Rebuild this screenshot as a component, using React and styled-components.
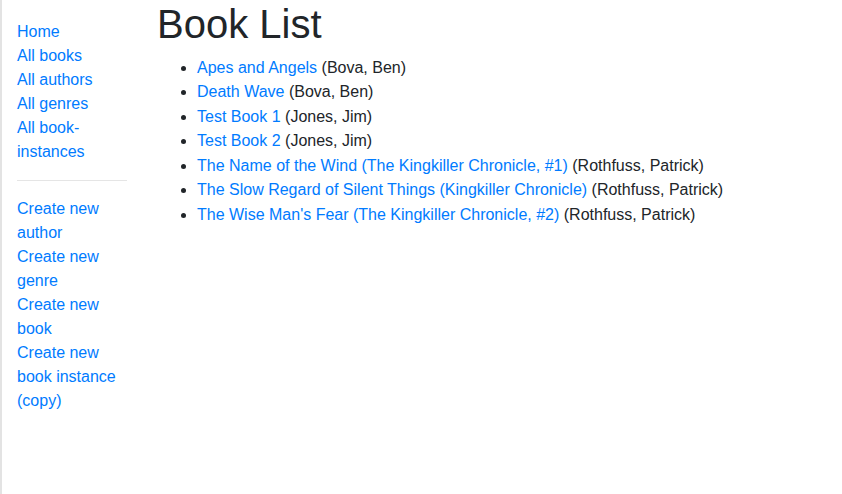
import React from "react";
import styled, { createGlobalStyle } from "styled-components";

const GlobalStyle = createGlobalStyle`
  html, body { margin: 0; padding: 0; background: #fff; }
  body {
    font-family: "Liberation Sans", Arial, sans-serif;
    font-size: 16px;
    line-height: 1.5;
    color: #212529;
  }
  * { box-sizing: border-box; }
`;

const Page = styled.div`
  display: flex;
  min-height: 494px;
  border-left: 2px solid #e3e3e3;
`;

const Sidebar = styled.nav`
  flex: 0 0 140px;
  padding: 0 15px;
`;

const NavList = styled.ul`
  list-style: none;
  margin: 20px 0 0;
  padding: 0;
`;

const NavItem = styled.li``;

const Divider = styled.hr`
  margin: 16px 0;
  border: 0;
  border-top: 1px solid rgba(0, 0, 0, 0.1);
`;

const Link = styled.a`
  color: #007bff;
  text-decoration: none;
`;

const Main = styled.main`
  flex: 1;
  padding: 0 15px;
`;

const Title = styled.h1`
  margin: 0 0 8px;
  font-size: 40px;
  font-weight: 500;
  line-height: 1.2;
`;

const BookList = styled.ul`
  margin: 0 0 16px;
  padding-left: 40px;
`;

const BookItem = styled.li`
  line-height: 24.45px;
`;

const navTop = ["Home", "All books", "All authors", "All genres", "All book-instances"];
const navBottom = [
  "Create new author",
  "Create new genre",
  "Create new book",
  "Create new book instance (copy)",
];

const books = [
  ["Apes and Angels", "Bova, Ben"],
  ["Death Wave", "Bova, Ben"],
  ["Test Book 1", "Jones, Jim"],
  ["Test Book 2", "Jones, Jim"],
  ["The Name of the Wind (The Kingkiller Chronicle, #1)", "Rothfuss, Patrick"],
  ["The Slow Regard of Silent Things (Kingkiller Chronicle)", "Rothfuss, Patrick"],
  ["The Wise Man's Fear (The Kingkiller Chronicle, #2)", "Rothfuss, Patrick"],
];

export default function App() {
  return (
    <>
      <GlobalStyle />
      <Page>
        <Sidebar>
          <NavList>
            {navTop.map((t) => (
              <NavItem key={t}>
                <Link href="#">{t}</Link>
              </NavItem>
            ))}
            <NavItem>
              <Divider />
            </NavItem>
            {navBottom.map((t) => (
              <NavItem key={t}>
                <Link href="#">{t}</Link>
              </NavItem>
            ))}
          </NavList>
        </Sidebar>
        <Main>
          <Title>Book List</Title>
          <BookList>
            {books.map(([title, author]) => (
              <BookItem key={title}>
                <Link href="#">{title}</Link> ({author})
              </BookItem>
            ))}
          </BookList>
        </Main>
      </Page>
    </>
  );
}
